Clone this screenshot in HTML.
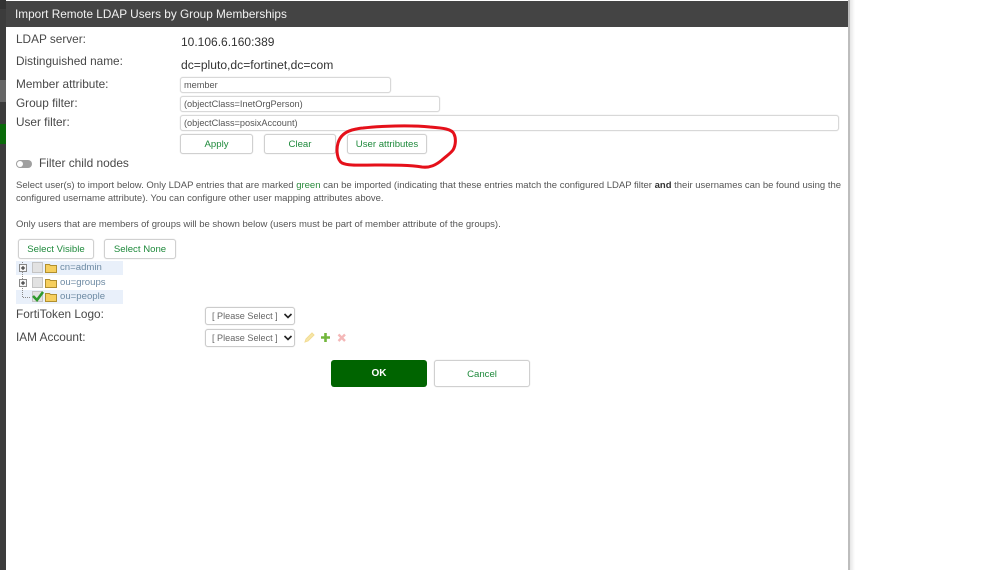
<!DOCTYPE html>
<html><head><meta charset="utf-8">
<style>
html,body{margin:0;padding:0;background:#fff}
#r{position:relative;width:999px;height:570px;overflow:hidden;background:#fff;font-family:"Liberation Sans",sans-serif;color:#444}
.a{position:absolute;white-space:nowrap}
.l{font-size:11.8px;color:#484848;left:16px;line-height:14px}
.v{font-size:12px;color:#333;left:181px;line-height:14px}
.i{border:1px solid #d8d8d8;box-shadow:0 0 1px #ccc;border-radius:3px;height:14px;left:180px;font-size:9.2px;line-height:15px;color:#555;padding-left:3px;box-sizing:content-box;background:#fff}
.b{border:1px solid #d0d0d0;box-shadow:0 0 1px #ccc;border-radius:3px;box-sizing:border-box;text-align:center;font-size:9.6px;color:#1f8a3c;background:#fff}
.t{font-size:9.5px;color:#555;left:16px;line-height:13px}
.n{font-size:9.6px;color:#6d8aa3;left:60px;line-height:12px}
.s{border:1px solid #ccc;box-shadow:0 0 1px #ccc;border-radius:3px;left:205px;width:90px;height:18px;box-sizing:border-box;font-size:9.1px;color:#666;line-height:17px;padding-left:6px;background:#fff}
</style></head><body>
<div id="r">
<div class="a" style="left:0;top:0;width:6px;height:570px;background:#3c3c3c"></div>
<div class="a" style="left:0;top:80px;width:6px;height:22px;background:#666"></div>
<div class="a" style="left:0;top:124px;width:6px;height:20px;background:#0a6b0a"></div>
<div class="a" style="left:0;top:0;width:6px;height:9px;background:#333"></div>

<div class="a" style="left:848px;top:0;width:2px;height:570px;background:#bdbdbd"></div>
<div class="a" style="left:850px;top:0;width:5px;height:570px;background:linear-gradient(90deg,#e6e6e6,#fff)"></div>

<div class="a" style="left:6px;top:1px;width:842px;height:26px;background:#444"></div>
<div class="a" style="left:15px;top:7px;font-size:11.8px;line-height:15px;color:#f2f2f2">Import Remote LDAP Users by Group Memberships</div>

<div class="a l" style="top:32px">LDAP server:</div>
<div class="a l" style="top:54px">Distinguished name:</div>
<div class="a l" style="top:77px">Member attribute:</div>
<div class="a l" style="top:96px">Group filter:</div>
<div class="a l" style="top:115px">User filter:</div>
<div class="a v" style="top:35px">10.106.6.160:389</div>
<div class="a v" style="top:58px;font-size:12.1px">dc=pluto,dc=fortinet,dc=com</div>

<div class="a i" style="top:77px;width:206px">member</div>
<div class="a i" style="top:96px;width:255px">(objectClass=InetOrgPerson)</div>
<div class="a i" style="top:115px;width:654px">(objectClass=posixAccount)</div>

<div class="a b" style="left:180px;top:134px;width:73px;height:20px;line-height:20px">Apply</div>
<div class="a b" style="left:264px;top:134px;width:72px;height:20px;line-height:20px">Clear</div>
<div class="a b" style="left:347px;top:134px;width:80px;height:20px;line-height:20px">User attributes</div>

<svg class="a" style="left:0;top:0" width="999" height="570" viewBox="0 0 999 570">
<path d="M363 128C380 126 410 125 430 127C443 128 452 129 454 134C456 138 456 145 453 150C450 154 445 157 442 160C436 165 430 168 422 167C410 165 395 165 375 165C362 165 348 166 342 163C337 160 336 150 338 143C340 136 345 132 352 130C356 129 360 128 363 128Z" fill="none" stroke="#e5101a" stroke-width="3" stroke-linecap="round"/>
<rect x="16" y="160" width="16" height="8" rx="4" fill="#a0a0a0"/>
<circle cx="20" cy="164" r="3" fill="#fff"/>
</svg>
<div class="a" style="left:39px;top:156px;font-size:11.9px;line-height:14px;color:#484848">Filter child nodes</div>

<div class="a t" style="top:179px">Select user(s) to import below. Only LDAP entries that are marked <span style="color:#2a8a3c">green</span> can be imported (indicating that these entries match the configured LDAP filter <b style="color:#333">and</b> their usernames can be found using the</div>
<div class="a t" style="top:192px">configured username attribute). You can configure other user mapping attributes above.</div>
<div class="a t" style="top:218px">Only users that are members of groups will be shown below (users must be part of member attribute of the groups).</div>

<div class="a b" style="left:18px;top:239px;width:76px;height:20px;line-height:20px">Select Visible</div>
<div class="a b" style="left:104px;top:239px;width:72px;height:20px;line-height:20px">Select None</div>

<div class="a" style="left:16px;top:261px;width:107px;height:14px;background:#e9f0fa"></div>
<div class="a" style="left:16px;top:290px;width:107px;height:14px;background:#e9f0fa"></div>
<svg class="a" style="left:0;top:0" width="130" height="310" viewBox="0 0 130 310">
<path d="M22.500 262V297.500H31" fill="none" stroke="#888" stroke-dasharray="1 1"/>
<g fill="#f5f5f5" stroke="#888"><rect x="19.500" y="264.500" width="7" height="7"/><rect x="19.500" y="279.500" width="7" height="7"/></g>
<path d="M21 268H25M23 266V270M21 283H25M23 281V285" stroke="#222"/>
<g fill="#e2e2e2" stroke="#c4c4c4"><rect x="32.500" y="262.500" width="10" height="10"/><rect x="32.500" y="277.500" width="10" height="10"/><rect x="32.500" y="291.500" width="10" height="10"/></g>
<path d="M33 296L37 300L43 292" fill="none" stroke="#2e9a2e" stroke-width="2.600"/>
<g fill="#f6cf5e" stroke="#b08f30">
<path d="M45.500 264.500h4l1 1h6v7h-11z"/>
<path d="M45.500 279.500h4l1 1h6v7h-11z"/>
<path d="M45.500 293.500h4l1 1h6v7h-11z"/>
</g>
</svg>
<div class="a n" style="top:262px">cn=admin</div>
<div class="a n" style="top:277px">ou=groups</div>
<div class="a n" style="top:291px">ou=people</div>

<div class="a l" style="top:307px">FortiToken Logo:</div>
<div class="a l" style="top:330px">IAM Account:</div>
<div class="a s" style="top:307px">[ Please Select ]</div>
<div class="a s" style="top:329px">[ Please Select ]</div>
<svg class="a" style="left:0;top:0" width="400" height="350" viewBox="0 0 400 350">
<path d="M284.500 314L288 317.500L291.500 314M284.500 336L288 339.500L291.500 336" fill="none" stroke="#222" stroke-width="1.600"/>
<path d="M305 342L306 339L312 333L314 335L308 341Z" fill="#f7e6a8" stroke="#f2dc94"/>
<path d="M321 337.500H330M325.500 333V342" stroke="#72b63c" stroke-width="2.600"/>
<path d="M338.500 334.500L345 341M345 334.500L338.500 341" stroke="#f4b8b8" stroke-width="2.400"/>
</svg>

<div class="a" style="left:331px;top:360px;width:96px;height:27px;background:#006400;border-radius:3px;color:#fff;font-size:10px;font-weight:bold;text-align:center;line-height:28px">OK</div>
<div class="a b" style="left:434px;top:360px;width:96px;height:27px;line-height:27px">Cancel</div>
</div>
</body></html>
